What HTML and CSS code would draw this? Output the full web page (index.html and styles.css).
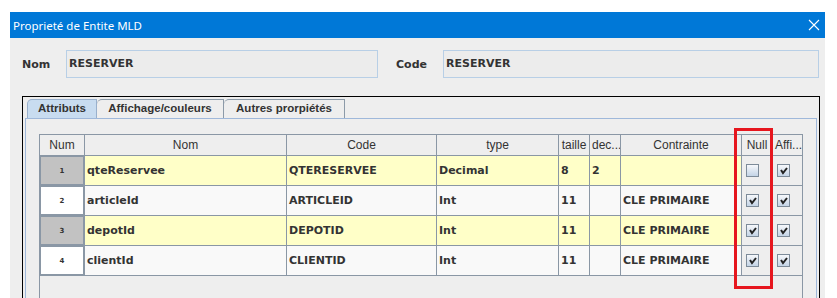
FILE: index.html
```html
<!DOCTYPE html>
<html lang="fr">

<head>
    <meta charset="UTF-8">
    <title>Proprieté de Entite MLD</title>
    <link rel="stylesheet" href="styles.css">
</head>

<body>
    <div class="window">
        <div class="titlebar">
            <span class="title">Proprieté de Entite MLD</span>
            <svg class="close" width="12" height="12" viewBox="0 0 12 12">
                <path d="M1 1 L11 11 M11 1 L1 11" stroke="#fff" stroke-width="1.1" fill="none" />
            </svg>
        </div>

        <div class="content">
            <div class="ident">
                <span class="lbl lbl-nom">Nom</span>
                <div class="field field-nom">RESERVER</div>
                <span class="lbl lbl-code">Code</span>
                <div class="field field-code">RESERVER</div>
            </div>

            <div class="frame">
                <div class="tabs">
                    <div class="tab tab-active" style="width: 70px">Attributs</div>
                    <div class="tab" style="width: 127px">Affichage/couleurs</div>
                    <div class="tab" style="width: 121px">Autres prorpiétés</div>
                </div>

                <div class="tab-panel">
                    <div class="scroll">
                        <div class="grid">
                            <!-- entete -->
                            <div class="hd">Num</div>
                            <div class="hd">Nom</div>
                            <div class="hd">Code</div>
                            <div class="hd">type</div>
                            <div class="hd">taille</div>
                            <div class="hd hd-left">dec...</div>
                            <div class="hd">Contrainte</div>
                            <div class="hd">Null</div>
                            <div class="hd hd-left last">Affi...</div>

                            <!-- ligne 1 -->
                            <div class="num num-sel">1</div>
                            <div class="cell alt">qteReservee</div>
                            <div class="cell alt">QTERESERVEE</div>
                            <div class="cell alt">Decimal</div>
                            <div class="cell alt">8</div>
                            <div class="cell alt">2</div>
                            <div class="cell alt"></div>
                            <div class="chk"><span class="box"></span></div>
                            <div class="chk last"><span class="box on"></span></div>

                            <!-- ligne 2 -->
                            <div class="num">2</div>
                            <div class="cell">articleId</div>
                            <div class="cell">ARTICLEID</div>
                            <div class="cell">Int</div>
                            <div class="cell">11</div>
                            <div class="cell"></div>
                            <div class="cell">CLE PRIMAIRE</div>
                            <div class="chk"><span class="box on"></span></div>
                            <div class="chk last"><span class="box on"></span></div>

                            <!-- ligne 3 -->
                            <div class="num num-sel">3</div>
                            <div class="cell alt">depotId</div>
                            <div class="cell alt">DEPOTID</div>
                            <div class="cell alt">Int</div>
                            <div class="cell alt">11</div>
                            <div class="cell alt"></div>
                            <div class="cell alt">CLE PRIMAIRE</div>
                            <div class="chk"><span class="box on"></span></div>
                            <div class="chk last"><span class="box on"></span></div>

                            <!-- ligne 4 -->
                            <div class="num">4</div>
                            <div class="cell">clientId</div>
                            <div class="cell">CLIENTID</div>
                            <div class="cell">Int</div>
                            <div class="cell">11</div>
                            <div class="cell"></div>
                            <div class="cell">CLE PRIMAIRE</div>
                            <div class="chk"><span class="box on"></span></div>
                            <div class="chk last"><span class="box on"></span></div>
                        </div>
                    </div>
                </div>
            </div>
        </div>
    </div>

    <!-- cadre rouge autour de la colonne Null -->
    <div class="highlight"></div>
</body>

</html>
```

FILE: styles.css
```css
html,
body {
    margin: 0;
    overflow: hidden;
    background: #fff;
}

body {
    position: relative;
    width: 837px;
    height: 298px;
}

.window {
    margin: 12px 0 0 10px;
    width: 815px;
}

.titlebar {
    display: flex;
    align-items: center;
    justify-content: space-between;
    height: 26px;
    background-color: #0078d7;
    padding: 0 5px 0 3px;
}

.title {
    font-family: "Noto Sans", sans-serif;
    font-size: 11.5px;
    color: #fff;
}

.close {
    display: block;
}

.content {
    background-color: #eeeeee;
    padding: 12px 6px 0 12px;
    height: 248px;
}

.ident {
    display: flex;
    align-items: center;
    height: 28px;
}

.lbl {
    font-family: "DejaVu Sans", sans-serif;
    font-weight: bold;
    font-size: 11px;
    color: #333;
}

.lbl-nom {
    width: 44px;
}

.lbl-code {
    width: 47px;
    margin-left: 18px;
}

.field {
    box-sizing: border-box;
    height: 28px;
    line-height: 26px;
    padding-left: 2px;
    border: 1px solid #b8cfe6;
    background-color: #ececec;
    font-family: "DejaVu Sans", sans-serif;
    font-weight: bold;
    font-size: 11px;
    color: #333;
}

.field-nom {
    width: 312px;
}

.field-code {
    width: 376px;
}

.frame {
    margin-top: 18px;
    width: 798px;
    box-sizing: border-box;
    border: 1px solid #000;
    border-bottom: none;
    padding: 2px 1px 0 1px;
    height: 202px;
}

.tabs {
    display: flex;
    height: 19px;
    padding-left: 3px;
}

.tab {
    box-sizing: border-box;
    height: 19px;
    border: 1px solid #8c9aa8;
    border-bottom: none;
    border-top-left-radius: 5px;
    background-color: #eeeeee;
    font-family: "Liberation Sans", Arial, sans-serif;
    font-weight: bold;
    font-size: 11.5px;
    color: #333;
    text-align: center;
    line-height: 17px;
}

.tab+.tab {
    border-left: none;
}

.tab-active {
    background-color: #c8dcf0;
    border-color: #99b0cc;
}

.tab-panel {
    margin: 0 1px;
    border: 1px solid #9fb8da;
    border-bottom: none;
    padding: 15px 14px 0 13px;
    height: 165px;
}

.scroll {
    box-sizing: border-box;
    width: 764px;
    height: 164px;
    border-left: 1px solid #8a97a5;
    border-right: 1px solid #8a97a5;
    background-color: #eeeeee;
}

.grid {
    display: grid;
    grid-template-columns: 45px 202px 150px 122px 31px 31px 121px 31px 29px;
    grid-auto-rows: 30px;
    grid-template-rows: 21px;
    border-top: 1px solid #8a97a5;
}

.grid>div {
    box-sizing: border-box;
    border-right: 1px solid #8a97a5;
    border-bottom: 1px solid #8a97a5;
    overflow: hidden;
    white-space: nowrap;
}

.grid>div.last {
    border-right: none;
}

.hd {
    background-color: #eeeeee;
    font-family: "Liberation Sans", Arial, sans-serif;
    font-size: 12px;
    color: #333;
    text-align: center;
    line-height: 20px;
}

.hd-left {
    text-align: left;
    padding-left: 2px;
}

.cell {
    display: flex;
    align-items: center;
    padding-left: 2px;
    background-color: #f9f9f9;
    font-family: "DejaVu Sans", sans-serif;
    font-weight: bold;
    font-size: 11px;
    color: #333;
}

.cell.alt {
    background-color: #ffffc8;
}

.num {
    display: flex;
    align-items: center;
    justify-content: center;
    background-color: #fff;
    box-shadow: inset 0 0 0 1px #8a97a5;
    font-family: "DejaVu Sans", sans-serif;
    font-weight: bold;
    font-size: 7px;
    color: #333;
}

.num-sel {
    background-color: #c2c2c2;
}

.chk {
    display: flex;
    align-items: center;
    padding-left: 4px;
    background-color: #eeeeee;
}

.box {
    box-sizing: border-box;
    width: 13px;
    height: 13px;
    border: 1px solid #7d8b99;
    background: linear-gradient(#f6f8fb, #c4d4e6);
}

.box.on {
    background:
        url("data:image/svg+xml,%3Csvg xmlns='http://www.w3.org/2000/svg' width='11' height='11'%3E%3Cpath d='M3 5 L5 8 L9 3' stroke='%23222' stroke-width='2' fill='none'/%3E%3C/svg%3E") no-repeat,
        linear-gradient(#f6f8fb, #c4d4e6);
}

.highlight {
    position: absolute;
    left: 734px;
    top: 128px;
    width: 39px;
    height: 161px;
    box-sizing: border-box;
    border: 3px solid #e6161e;
}
```
